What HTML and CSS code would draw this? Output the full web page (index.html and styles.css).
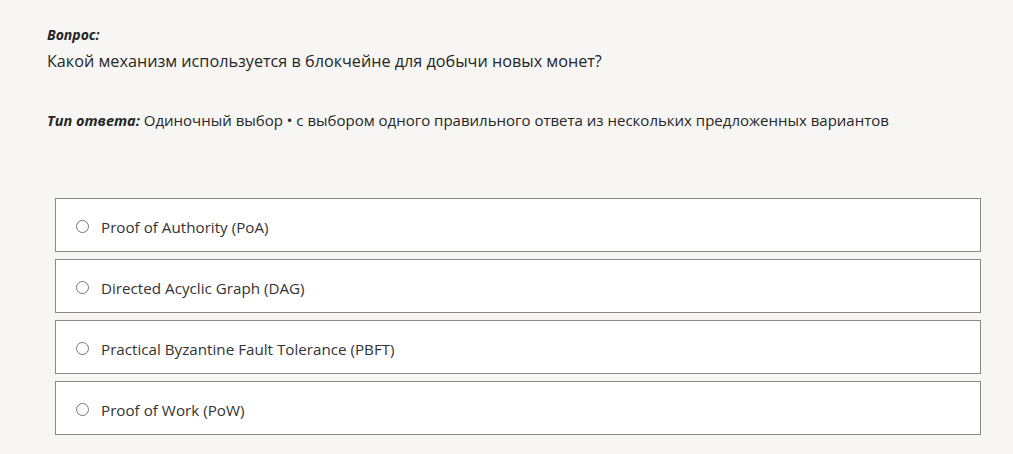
FILE: index.html
```html
<!DOCTYPE html>
<html lang="ru">
<head>
  <meta charset="UTF-8">
  <title>Вопрос</title>
  <link rel="stylesheet" href="styles.css">
</head>
<body>
  <div class="quiz">
    <div class="label">Вопрос:</div>
    <div class="question">Какой механизм используется в блокчейне для добычи новых монет?</div>

    <div class="answer-type"><span class="label">Тип ответа:</span> Одиночный выбор • с выбором одного правильного ответа из нескольких предложенных вариантов</div>

    <div class="options">
      <label class="option"><input type="radio" name="q"> Proof of Authority (PoA)</label>
      <label class="option"><input type="radio" name="q"> Directed Acyclic Graph (DAG)</label>
      <label class="option"><input type="radio" name="q"> Practical Byzantine Fault Tolerance (PBFT)</label>
      <label class="option"><input type="radio" name="q"> Proof of Work (PoW)</label>
    </div>
  </div>
</body>
</html>
```

FILE: styles.css
```css
* {
  box-sizing: border-box;
}

html, body {
  margin: 0;
  padding: 0;
  background-color: #f7f6f4;
  font-family: 'Open Sans', 'Noto Sans', sans-serif;
  color: #262626;
}

.quiz {
  padding: 26px 32px 0 47px;
}

.label {
  font-weight: bold;
  font-style: italic;
  font-size: 14px;
  line-height: 18px;
}

.question {
  font-size: 16.2px;
  line-height: 26px;
  margin-top: 4px;
}

.answer-type {
  margin-top: 36px;
  font-size: 15px;
  line-height: 20px;
}

.answer-type .label {
  font-size: 14.5px;
}

.options {
  margin-top: 68px;
  margin-left: 8px;
  display: flex;
  flex-direction: column;
  gap: 7px;
  width: 926px;
}

.option {
  display: flex;
  align-items: center;
  height: 54px;
  padding: 3px 0 0 20px;
  background-color: #fff;
  border: 1px solid #8a8a8a;
  font-size: 15.2px;
  color: #333;
  cursor: pointer;
}

.option input {
  margin: 0 12px 0 0;
  width: 13px;
  height: 13px;
}
```
